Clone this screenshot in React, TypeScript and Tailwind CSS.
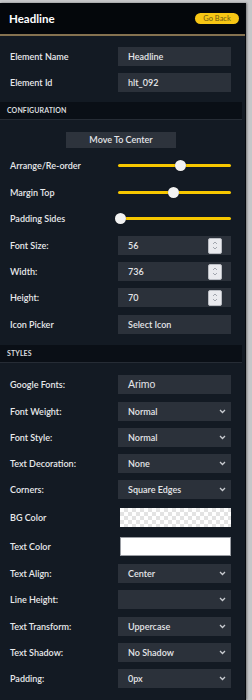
import React from "react";

const font = { fontFamily: "Lato, 'Noto Sans', sans-serif" };

const Chevron: React.FC = () => (
  <svg width="7" height="5" viewBox="0 0 7 5" className="shrink-0">
    <path d="M1 1l2.5 2.5L6 1" fill="none" stroke="#c9ccd1" strokeWidth="1.3" />
  </svg>
);

const Spinner: React.FC = () => (
  <div className="w-[14px] h-[16px] bg-[#e9eaee] border border-[#b9bcc2] rounded-[2px] flex flex-col items-center justify-center gap-[1px]">
    <svg width="6" height="4" viewBox="0 0 6 4">
      <path d="M1 3l2-2 2 2" fill="none" stroke="#9a9ea6" strokeWidth="0.9" />
    </svg>
    <svg width="6" height="4" viewBox="0 0 6 4">
      <path d="M1 1l2 2 2-2" fill="none" stroke="#9a9ea6" strokeWidth="0.9" />
    </svg>
  </div>
);

type RowProps = { label: string; mt?: string; children: React.ReactNode };

const Row: React.FC<RowProps> = ({ label, mt = "", children }) => (
  <div className={`flex items-center h-[19px] ${mt}`}>
    <div className="w-[118px] pl-[10px] text-[9px] text-[#e8e9eb] font-semibold">{label}</div>
    <div className="w-[113px] h-full">{children}</div>
  </div>
);

const TextBox: React.FC<{ value: string; big?: boolean }> = ({ value, big }) => (
  <div
    className={`h-full bg-[#2b313a] flex items-center pl-[10px] text-[#e4e5e8] ${
      big ? "text-[10.5px]" : "text-[9px] font-semibold"
    }`}
    style={big ? { fontFamily: "'Liberation Sans', Arial, sans-serif" } : undefined}
  >
    {value}
  </div>
);

const NumberBox: React.FC<{ value: string }> = ({ value }) => (
  <div className="h-full bg-[#2b313a] flex items-center justify-between pl-[10px] pr-[9px] text-[9px] font-semibold text-[#e4e5e8]">
    <span>{value}</span>
    <Spinner />
  </div>
);

const SelectBox: React.FC<{ value: string }> = ({ value }) => (
  <div className="h-full bg-[#2b313a] flex items-center justify-between pl-[10px] pr-[5px] text-[9px] font-semibold text-[#e4e5e8]">
    <span>{value}</span>
    <Chevron />
  </div>
);

const Slider: React.FC<{ pos: number }> = ({ pos }) => (
  <div className="relative h-full flex items-center">
    <div className="w-full h-[3px] rounded-full bg-[#f6c700]" />
    <div
      className="absolute top-1/2 w-[11px] h-[11px] -mt-[5.5px] -ml-[5.5px] rounded-full bg-[#f2f2f2] shadow-[0_0_1px_rgba(0,0,0,0.6)]"
      style={{ left: `${pos}px` }}
    />
  </div>
);

const SectionHeader: React.FC<{ title: string; mt: string }> = ({ title, mt }) => (
  <div
    className={`w-[242px] h-[18px] bg-[#0a0f16] border-b border-[#262c35] flex items-center pl-[7px] text-[7px] font-bold tracking-[0.1px] text-[#d9dbdf] ${mt}`}
  >
    {title}
  </div>
);

export default function App() {
  return (
    <div className="w-[252px] h-[700px] bg-[#c6c7c9] pt-[3px] overflow-hidden" style={font}>
      <div className="w-[246px] h-[697px] bg-[#131a23] border-r border-[#06090d] shadow-[1px_0_2px_rgba(0,0,0,0.4)]">
        {/* header */}
        <div className="h-[33px] bg-[#04070b] border-b-2 border-[#857250] flex items-center justify-between pl-[9px] pr-[6px]">
          <span className="text-[11.5px] font-bold text-white">Headline</span>
          <button className="h-[11px] w-[44px] rounded-full bg-[#f7c614] text-[7.5px] leading-none text-[#6e5a12] flex items-center justify-center">
            Go Back
          </button>
        </div>

        <div className="flex flex-col pt-[11px]">
          <Row label="Element Name">
            <TextBox value="Headline" />
          </Row>
          <Row label="Element Id" mt="mt-[7px]">
            <TextBox value="hlt_092" />
          </Row>

          <SectionHeader title="CONFIGURATION" mt="mt-[10px]" />

          <div className="flex pl-[66px] mt-[12px]">
            <div className="w-[110px] h-[16px] bg-[#2d333c] flex items-center justify-center text-[9px] font-semibold text-[#e4e5e8]">
              Move To Center
            </div>
          </div>

          <Row label="Arrange/Re-order" mt="mt-[8px]">
            <Slider pos={62} />
          </Row>
          <Row label="Margin Top" mt="mt-[8px]">
            <Slider pos={55} />
          </Row>
          <Row label="Padding Sides" mt="mt-[7px]">
            <Slider pos={2} />
          </Row>
          <Row label="Font Size:" mt="mt-[8px]">
            <NumberBox value="56" />
          </Row>
          <Row label="Width:" mt="mt-[7px]">
            <NumberBox value="736" />
          </Row>
          <Row label="Height:" mt="mt-[7px]">
            <NumberBox value="70" />
          </Row>
          <Row label="Icon Picker" mt="mt-[8px]">
            <TextBox value="Select Icon" />
          </Row>

          <SectionHeader title="STYLES" mt="mt-[11px]" />

          <Row label="Google Fonts:" mt="mt-[12px]">
            <TextBox value="Arimo" big />
          </Row>
          <Row label="Font Weight:" mt="mt-[8px]">
            <SelectBox value="Normal" />
          </Row>
          <Row label="Font Style:" mt="mt-[7px]">
            <SelectBox value="Normal" />
          </Row>
          <Row label="Text Decoration:" mt="mt-[7px]">
            <SelectBox value="None" />
          </Row>
          <Row label="Corners:" mt="mt-[7px]">
            <SelectBox value="Square Edges" />
          </Row>
          <Row label="BG Color" mt="mt-[9px]">
            <div className="ml-[2px] h-full bg-[repeating-conic-gradient(#e3e3e3_0_25%,#ffffff_0_50%)] bg-[length:8px_8px]" />
          </Row>
          <Row label="Text Color" mt="mt-[10px]">
            <div className="ml-[2px] h-full bg-white border border-[#9a9da3]" />
          </Row>
          <Row label="Text Align:" mt="mt-[8px]">
            <SelectBox value="Center" />
          </Row>
          <Row label="Line Height:" mt="mt-[7px]">
            <SelectBox value="" />
          </Row>
          <Row label="Text Transform:" mt="mt-[8px]">
            <SelectBox value="Uppercase" />
          </Row>
          <Row label="Text Shadow:" mt="mt-[7px]">
            <SelectBox value="No Shadow" />
          </Row>
          <Row label="Padding:" mt="mt-[7px]">
            <SelectBox value="0px" />
          </Row>
        </div>
      </div>
    </div>
  );
}
